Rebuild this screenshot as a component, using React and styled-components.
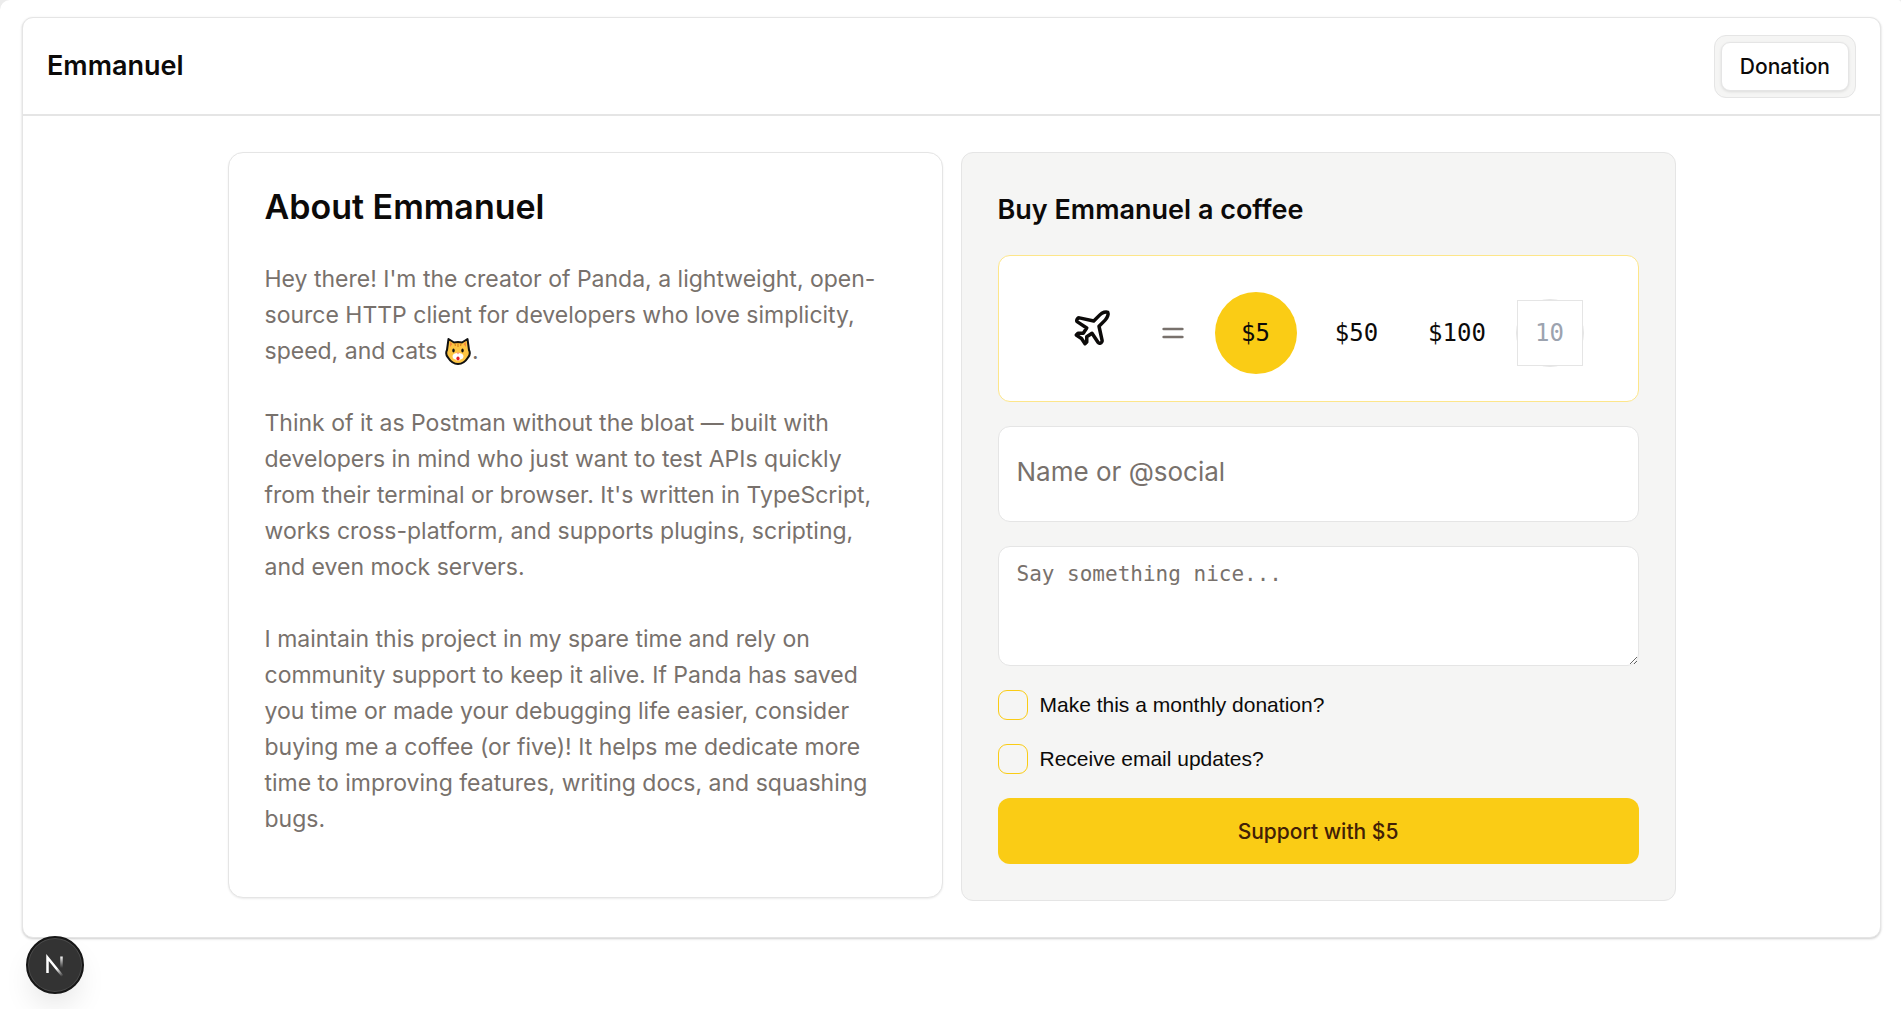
import React, { useState } from "react";
import styled, { createGlobalStyle } from "styled-components";
import { Plane, Equal } from "lucide-react";

const sans = '"Inter", "Liberation Sans", sans-serif';
const mono = '"DejaVu Sans Mono", "Liberation Mono", monospace';

const GlobalStyle = createGlobalStyle`
  *, *::before, *::after { box-sizing: border-box; }
  body {
    margin: 0;
    background: #ececec;
    color: #0c0a09;
    font-family: ${sans};
  }
  button, input, textarea { font: inherit; color: inherit; margin: 0; }
  h1, h2, h3, p { margin: 0; }
`;

const Page = styled.div`
  min-height: 100vh;
  padding: 17px 20px 24px 22px;
  border-radius: 10px 3px 0 0;
  background: #fff;
`;

const Shell = styled.div`
  border: 1px solid #e5e5e5;
  border-radius: 11px;
  background: #fff;
  box-shadow: 0 1px 3px rgba(0, 0, 0, 0.1), 0 1px 2px rgba(0, 0, 0, 0.1);
`;

const Header = styled.header`
  display: flex;
  align-items: center;
  justify-content: space-between;
  height: 98px;
  padding: 0 24px;
  border-bottom: 2px solid #e5e5e5;
`;

const Brand = styled.h1`
  font-size: 27px;
  line-height: 36px;
  font-weight: 600;
`;

const Tabs = styled.nav`
  padding: 6px;
  border: 1px solid #e5e5e5;
  border-radius: 12px;
  background: #f5f5f4;
`;

const Tab = styled.button`
  display: block;
  height: 49px;
  padding: 0 18px;
  border: 1px solid #e5e5e5;
  border-radius: 9px;
  background: #fff;
  box-shadow: 0 1px 3px rgba(0, 0, 0, 0.1);
  font-size: 21px;
  font-weight: 500;
`;

const Main = styled.main`
  display: grid;
  grid-template-columns: 1fr 1fr;
  align-items: start;
  gap: 18px;
  max-width: 1448px;
  margin: 0 auto;
  padding: 36px 0;
`;

const Card = styled.section`
  padding: 36px;
  border: 1px solid #e5e5e5;
  border-radius: 15px;
`;

const AboutCard = styled(Card)`
  padding-bottom: 60px;
  background: #fff;
  box-shadow: 0 1px 2px rgba(0, 0, 0, 0.08);
`;

const AboutTitle = styled.h2`
  margin-bottom: 36px;
  font-size: 34px;
  line-height: 36px;
  font-weight: 600;
`;

const Story = styled.div`
  display: flex;
  flex-direction: column;
  gap: 36px;
  padding-right: 18px;
  color: #78716c;
  font-size: 23px;
  line-height: 36px;
`;

const CatIcon = styled.svg`
  width: 28px;
  height: 28px;
  vertical-align: -6px;
`;

const DonateCard = styled(Card)`
  border-radius: 12px;
  background: #f5f5f4;
`;

const Form = styled.form`
  display: flex;
  flex-direction: column;
  gap: 24px;
`;

const FormTitle = styled.h2`
  padding: 3px 0;
  font-size: 27px;
  line-height: 36px;
  font-weight: 600;
`;

const AmountPanel = styled.div`
  display: flex;
  align-items: center;
  justify-content: center;
  padding: 36px 36px 27px;
  border: 1px solid #fde68a;
  border-radius: 12px;
  background: #fff;
`;

const PlaneIcon = styled(Plane)`
  align-self: flex-start;
  margin: 15px 44px 0 18px;
`;

const EqualIcon = styled(Equal)`
  margin-right: 26px;
  color: #78716c;
`;

const Amount = styled.button`
  display: grid;
  place-items: center;
  width: ${(p) => p.$size}px;
  height: 82px;
  padding: 0;
  border: 0;
  border-radius: 50%;
  background: ${(p) => (p.$active ? "#facc15" : "transparent")};
  font-family: ${mono};
  font-size: 24px;
`;

const CustomRing = styled.div`
  display: grid;
  place-items: center;
  width: 68px;
  height: 68px;
  margin-left: 18px;
  border: 1px solid #e5e5e5;
  border-radius: 50%;
`;

const CustomAmount = styled.input`
  width: 66px;
  height: 66px;
  padding: 0;
  border: 1px solid #e5e5e5;
  border-radius: 0;
  background: #fff;
  font-family: ${mono};
  font-size: 24px;
  text-align: center;
  &::placeholder { color: #9ca3af; opacity: 1; }
`;

const NameInput = styled.input`
  width: 100%;
  height: 96px;
  padding: 0 18px 6px;
  border: 1px solid #e5e5e5;
  border-radius: 12px;
  background: #fff;
  font-size: 26px;
  &::placeholder { color: #78716c; opacity: 1; }
`;

const Message = styled.textarea`
  display: block;
  width: 100%;
  height: 120px;
  padding: 12px 18px;
  border: 1px solid #e5e5e5;
  border-radius: 12px;
  background: #fff;
  font-family: ${mono};
  font-size: 21px;
  line-height: 30px;
  resize: vertical;
  &::placeholder { color: #78716c; opacity: 1; }
`;

const CheckRow = styled.label`
  display: flex;
  align-items: center;
  gap: 12px;
  height: 30px;
  font-family: "Liberation Sans", Arial, sans-serif;
  font-size: 21px;
`;

const CheckBox = styled.input`
  appearance: none;
  width: 30px;
  height: 30px;
  border: 1px solid #facc15;
  border-radius: 9px;
  background: ${(p) => (p.checked ? "#facc15" : "transparent")};
`;

const Submit = styled.button`
  height: 66px;
  border: 0;
  border-radius: 12px;
  background: #facc15;
  color: #422006;
  font-size: 21px;
  font-weight: 500;
`;

const DevBadge = styled.button`
  position: fixed;
  left: 26px;
  bottom: 15px;
  display: grid;
  place-items: center;
  width: 58px;
  height: 58px;
  padding: 0;
  border: 2px solid #171717;
  border-radius: 50%;
  background: #333;
  box-shadow: inset 0 0 0 1px #4b4b4b, 0 16px 32px -8px rgba(0, 0, 0, 0.14);
`;

function Cat() {
  return (
    <CatIcon viewBox="0 0 28 28" aria-hidden="true">
      <path d="M4.500 2 10 5.500Q14 4.500 18 5.500L23.500 2 25 13Q27 17 24 20.500 20 27 14 27 8 27 4 20.500 1 17 3 13Z" fill="#fdc543" stroke="#111" strokeWidth="2" strokeLinejoin="round" />
      <path d="M6 5 8.500 7 6 10ZM22 5 19.500 7 22 10Z" fill="#f58a3c" />
      <path d="M14 6v4M11 6.500 11.500 9M17 6.500 16.500 9" stroke="#d9861f" strokeWidth="1.300" />
      <path d="M14 16Q9 16 8.500 19 8.500 22 11.500 22.500 14 25 16.500 22.500 19.500 22 19.500 19 19 16 14 16Z" fill="#fff" />
      <path d="M12.500 15.500h3L14 17.500Z" fill="#f79489" />
      <ellipse cx="9.500" cy="13.500" rx="1.200" ry="1.900" fill="#111" />
      <ellipse cx="18.500" cy="13.500" rx="1.200" ry="1.900" fill="#111" />
      <ellipse cx="14" cy="21.500" rx="1.600" ry="1.900" fill="#e81c24" />
    </CatIcon>
  );
}

function NextMark() {
  return (
    <svg width="22" height="24" viewBox="0 0 22 24" fill="none" aria-hidden="true">
      <defs>
        <linearGradient id="stem" x1="0" y1="3" x2="0" y2="15" gradientUnits="userSpaceOnUse">
          <stop stopColor="#fff" />
          <stop offset="1" stopColor="#fff" stopOpacity="0" />
        </linearGradient>
        <linearGradient id="slash" x1="13" y1="15" x2="19" y2="23" gradientUnits="userSpaceOnUse">
          <stop stopColor="#fff" />
          <stop offset="1" stopColor="#fff" stopOpacity="0" />
        </linearGradient>
      </defs>
      <path d="M3.500 20V4.500L18.500 23" stroke="url(#slash)" strokeWidth="2.500" />
      <path d="M17.500 3.500V15" stroke="url(#stem)" strokeWidth="2.500" />
    </svg>
  );
}

const amounts = [
  { value: 5, size: 82 },
  { value: 50, size: 120 },
  { value: 100, size: 81 },
];

export default function App() {
  const [amount, setAmount] = useState(5);
  const [monthly, setMonthly] = useState(false);
  const [updates, setUpdates] = useState(false);

  return (
    <Page>
      <GlobalStyle />
      <Shell>
        <Header>
          <Brand>Emmanuel</Brand>
          <Tabs>
            <Tab type="button">Donation</Tab>
          </Tabs>
        </Header>
        <Main>
          <AboutCard>
            <AboutTitle>About Emmanuel</AboutTitle>
            <Story>
              <p>
                Hey there! I'm the creator of Panda, a lightweight, open-source HTTP client for
                developers who love simplicity, speed, and cats <Cat />.
              </p>
              <p>
                Think of it as Postman without the bloat — built with developers in mind who just
                want to test APIs quickly from their terminal or browser. It's written in
                TypeScript, works cross-platform, and supports plugins, scripting, and even mock
                servers.
              </p>
              <p>
                I maintain this project in my spare time and rely on community support to keep it
                alive. If Panda has saved you time or made your debugging life easier, consider
                buying me a coffee (or five)! It helps me dedicate more time to improving features,
                writing docs, and squashing bugs.
              </p>
            </Story>
          </AboutCard>
          <DonateCard>
            <Form onSubmit={(e) => e.preventDefault()}>
              <FormTitle>Buy Emmanuel a coffee</FormTitle>
              <AmountPanel>
                <PlaneIcon size={42} strokeWidth={2} />
                <EqualIcon size={32} strokeWidth={2} />
                {amounts.map((a) => (
                  <Amount
                    key={a.value}
                    type="button"
                    $size={a.size}
                    $active={amount === a.value}
                    onClick={() => setAmount(a.value)}
                  >
                    ${a.value}
                  </Amount>
                ))}
                <CustomRing>
                  <CustomAmount placeholder="10" aria-label="Custom amount" />
                </CustomRing>
              </AmountPanel>
              <NameInput placeholder="Name or @social" aria-label="Name or @social" />
              <Message placeholder="Say something nice..." aria-label="Message" />
              <CheckRow>
                <CheckBox type="checkbox" checked={monthly} onChange={() => setMonthly(!monthly)} />
                Make this a monthly donation?
              </CheckRow>
              <CheckRow>
                <CheckBox type="checkbox" checked={updates} onChange={() => setUpdates(!updates)} />
                Receive email updates?
              </CheckRow>
              <Submit type="submit">Support with ${amount}</Submit>
            </Form>
          </DonateCard>
        </Main>
      </Shell>
      <DevBadge type="button" aria-label="Open dev tools">
        <NextMark />
      </DevBadge>
    </Page>
  );
}
